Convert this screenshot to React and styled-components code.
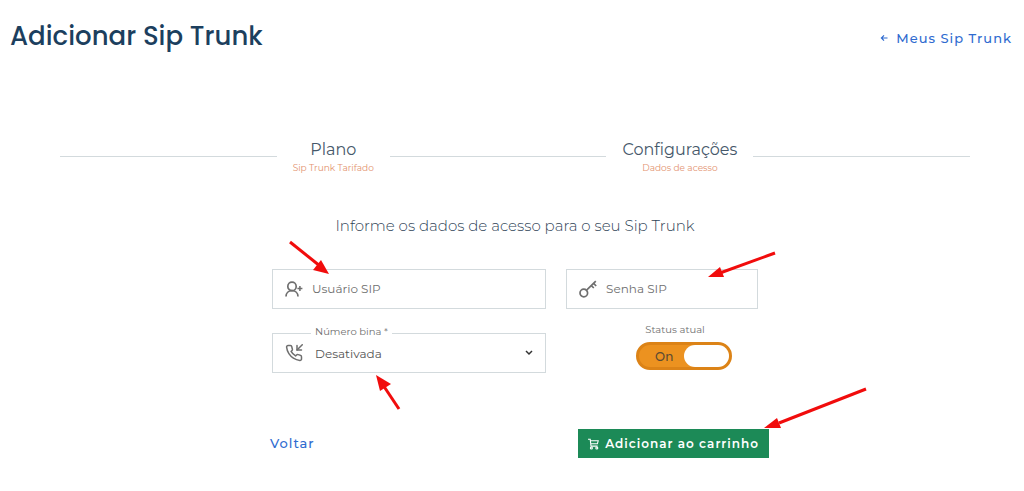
import React, { useState } from 'react';
import styled, { createGlobalStyle } from 'styled-components';
import { FiPhoneIncoming } from 'react-icons/fi';

const Colors = {
  title: '#1c3f5e',
  text: '#46586a',
  link: '#2f6bd0',
  accent: '#e3936f',
  border: '#d3dadd',
  muted: '#6f6f6f',
  green: '#1c8a57',
  orange: '#ec9220',
  red: '#f10c0c',
};

const App = () => {
  const [active, setActive] = useState(true);

  return (
    <React.Fragment>
      <GlobalStyle />
      <Header>
        <Title>Adicionar Sip Trunk</Title>
        <BackLink href="#meus-sip-trunk">
          <svg width="8" height="8" viewBox="0 0 8 8" fill="none" stroke="currentColor" strokeWidth="1.2">
            <path d="M7.5 4H1.5M4 1.4L1.4 4 4 6.6" />
          </svg>
          Meus Sip Trunk
        </BackLink>
      </Header>
      <Main>
        <Steps>
          <Step>
            <StepName>Plano</StepName>
            <StepInfo>Sip Trunk Tarifado</StepInfo>
          </Step>
          <Step>
            <StepName>Configurações</StepName>
            <StepInfo>Dados de acesso</StepInfo>
          </Step>
        </Steps>
        <Form onSubmit={e => e.preventDefault()}>
          <Intro>Informe os dados de acesso para o seu Sip Trunk</Intro>
          <Fields>
            <Field>
              <UserIcon />
              <Input type="text" aria-label="Usuário SIP" placeholder="Usuário SIP" />
              <Arrow $left="14px" $top="-30px" width="44" height="38">
                <path d="M3 2L33 26" />
                <polygon points="42,34 26,30 34,20" />
              </Arrow>
            </Field>
            <Field>
              <KeyIcon />
              <Input type="password" aria-label="Senha SIP" placeholder="Senha SIP" />
              <Arrow $left="138px" $top="-20px" width="72" height="32">
                <path d="M70 3L15 23" />
                <polygon points="3,27 15,17 19,27" />
              </Arrow>
            </Field>
            <Field>
              <FiPhoneIncoming size={18} />
              <FloatingLabel htmlFor="bina">Número bina *</FloatingLabel>
              <Select id="bina" defaultValue="off">
                <option value="off">Desativada</option>
                <option value="on">Ativada</option>
              </Select>
              <Chevron viewBox="0 0 8 6">
                <path d="M1 1l3 3 3-3" />
              </Chevron>
              <Arrow $left="100px" $top="38px" width="30" height="40">
                <path d="M26 37L10 13" />
                <polygon points="3,3 18,12 7,19" />
              </Arrow>
            </Field>
            <Status>
              <StatusLabel htmlFor="status">Status atual</StatusLabel>
              <Toggle>
                <ToggleInput
                  id="status"
                  type="checkbox"
                  role="switch"
                  checked={active}
                  onChange={() => setActive(!active)}
                />
                <ToggleText>{active ? 'On' : 'Off'}</ToggleText>
                <Knob />
              </Toggle>
            </Status>
          </Fields>
          <Actions>
            <TextButton type="button">Voltar</TextButton>
            <CartButton type="submit">
              <CartIcon />
              Adicionar ao carrinho
              <Arrow $left="184px" $top="-44px" width="106" height="48">
                <path d="M104 4L17 38" />
                <polygon points="2,43 15,33 19,43" />
              </Arrow>
            </CartButton>
          </Actions>
        </Form>
      </Main>
    </React.Fragment>
  );
};
export default App;

const UserIcon = () => (
  <svg width="18" height="16" viewBox="0 0 18 16" fill="none" stroke="currentColor" strokeWidth="1.7">
    <circle cx="7" cy="5.4" r="4.2" />
    <path d="M1 15.5c0-3.4 2.6-5.9 6-5.9s6 2.5 6 5.9" />
    <path d="M12.4 7.5h5M14.9 5v5" strokeWidth="1.5" />
  </svg>
);

const KeyIcon = () => (
  <svg width="18" height="18" viewBox="0 0 18 18" fill="none" stroke="currentColor" strokeWidth="1.7">
    <circle cx="4.8" cy="13" r="3.8" />
    <path d="M7.6 10.2L16.8 1.2M12.4 5.6l2.4 2.4M14.6 3.4l2.6 2.6" />
  </svg>
);

const CartIcon = () => (
  <svg width="11" height="12" viewBox="0 0 11 12" fill="none" stroke="currentColor" strokeWidth="1.1">
    <path d="M0 1.2h2.2L3 8.1h6.6M2.4 2.8h7.8L9.4 5.8H2.8" />
    <circle cx="3.4" cy="10" r="1" />
    <circle cx="8.8" cy="10" r="1" />
  </svg>
);

const GlobalStyle = createGlobalStyle`
  * {
    box-sizing: border-box;
  }

  body {
    margin: 0;
    background: #fff;
    color: ${Colors.text};
    font-family: Montserrat, Inter, sans-serif;
    font-size: 12px;
  }

  button,
  input,
  select {
    font: inherit;
  }
`;

const Header = styled.header`
  display: flex;
  justify-content: space-between;
  align-items: center;
  padding: 16px 12px 0 10px;
`;

const Title = styled.h1`
  margin: 0;
  color: ${Colors.title};
  font-family: Poppins, Inter, sans-serif;
  font-size: 26px;
  font-weight: 500;
  line-height: 40px;
`;

const BackLink = styled.a`
  display: flex;
  align-items: center;
  gap: 8px;
  padding-top: 4px;
  color: ${Colors.link};
  font-size: 13px;
  font-weight: 500;
  letter-spacing: 1px;
  text-decoration: none;
`;

const Main = styled.main`
  padding: 84px 54px 0 60px;
`;

const Steps = styled.ol`
  display: flex;
  align-items: center;
  margin: 0;
  padding: 0;
  list-style: none;

  &::after {
    content: '';
    flex: 1;
    height: 1px;
    margin-bottom: 4px;
    background: ${Colors.border};
  }
`;

const Step = styled.li`
  flex: 1 1 auto;
  display: grid;
  grid-template-columns: 1fr auto;
  align-items: center;
  text-align: center;

  &::before {
    content: '';
    grid-row: 1 / 3;
    height: 1px;
    margin-bottom: 4px;
    background: ${Colors.border};
  }
`;

const StepName = styled.span`
  padding: 0 16px;
  font-size: 16px;
  line-height: 20px;
`;

const StepInfo = styled.span`
  padding: 0 16px;
  color: ${Colors.accent};
  font-size: 9px;
  line-height: 16px;
`;

const Form = styled.form`
  max-width: 486px;
  margin: 0 auto;
`;

const Intro = styled.p`
  margin: 40px 0 33px;
  color: #2f4457;
  font-size: 15px;
  font-weight: 300;
  line-height: 20px;
  text-align: center;
`;

const Fields = styled.div`
  display: grid;
  grid-template-columns: minmax(0, 10fr) minmax(0, 7fr);
  gap: 24px 20px;
`;

const Field = styled.div`
  position: relative;
  display: flex;
  align-items: center;
  gap: 8px;
  height: 40px;
  padding: 0 12px;
  border: 1px solid ${Colors.border};
  color: ${Colors.muted};

  > svg {
    flex-shrink: 0;
  }
`;

const Input = styled.input`
  flex: 1;
  min-width: 0;
  padding: 0 1px 2px;
  border: 0;
  outline: 0;
  background: none;
  color: ${Colors.muted};

  &::placeholder {
    color: ${Colors.muted};
  }
`;

const Select = styled.select`
  flex: 1;
  border: 0;
  outline: 0;
  padding: 0 4px;
  background: none;
  appearance: none;
  color: #555;
`;

const Chevron = styled.svg`
  width: 8px;
  height: 6px;
  fill: none;
  stroke: #333;
  stroke-width: 1.5;
  pointer-events: none;
`;

const FloatingLabel = styled.label`
  position: absolute;
  left: 38px;
  top: -10px;
  padding: 0 4px;
  background: #fff;
  font-size: 10px;
  line-height: 16px;
`;

const Status = styled.div`
  display: flex;
  flex-direction: column;
  align-items: center;
  gap: 4px;
  margin-top: -11px;
  padding-left: 44px;
`;

const StatusLabel = styled.label`
  padding-right: 18px;
  color: ${Colors.muted};
  font-size: 10px;
  line-height: 16px;
`;

const Toggle = styled.span`
  position: relative;
  display: flex;
  align-items: center;
  justify-content: space-between;
  width: 96px;
  height: 28px;
  padding-left: 16px;
  border: 3px solid #dc8317;
  border-radius: 14px;
  background: ${Colors.orange};
`;

const ToggleInput = styled.input`
  position: absolute;
  inset: 0;
  width: 100%;
  height: 100%;
  margin: 0;
  opacity: 0;
  cursor: pointer;
`;

const ToggleText = styled.span`
  color: #5c4a33;
  font-weight: 500;
`;

const Knob = styled.span`
  width: 45px;
  height: 22px;
  border-radius: 11px;
  background: #fff;
`;

const Actions = styled.div`
  display: flex;
  justify-content: space-between;
  align-items: center;
  margin: 56px -11px 0 -2px;
`;

const TextButton = styled.button`
  padding: 0 0 2px;
  border: 0;
  background: none;
  color: ${Colors.link};
  font-size: 13px;
  font-weight: 500;
  letter-spacing: 1px;
`;

const CartButton = styled.button`
  position: relative;
  display: flex;
  align-items: center;
  gap: 6px;
  height: 29px;
  padding: 0 10px;
  border: 0;
  background: ${Colors.green};
  color: #fff;
  font-weight: 600;
  letter-spacing: 1px;
`;

const Arrow = styled.svg.attrs({ 'aria-hidden': true })`
  position: absolute;
  left: ${props => props.$left};
  top: ${props => props.$top};
  overflow: visible;
  pointer-events: none;
  fill: ${Colors.red};
  stroke: ${Colors.red};
  stroke-width: 3;

  polygon {
    stroke: none;
  }
`;
